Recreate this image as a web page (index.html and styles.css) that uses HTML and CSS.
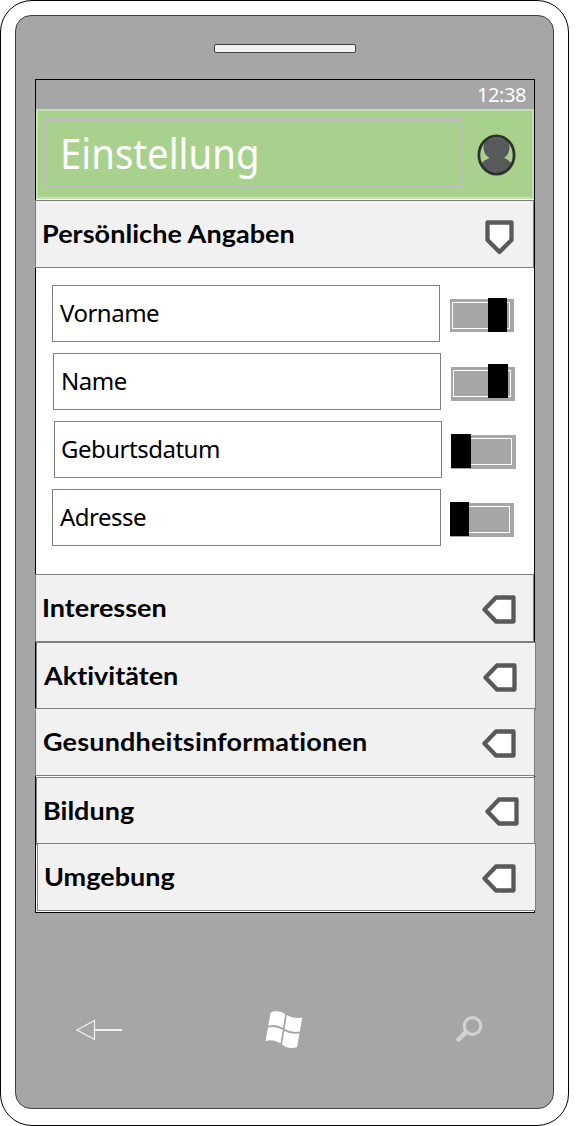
FILE: index.html
```html
<!DOCTYPE html>
<html lang="de">
<head>
<meta charset="utf-8">
<title>Einstellung</title>
<link rel="stylesheet" href="styles.css">
</head>
<body>
<svg class="defs" width="0" height="0">
  <symbol id="tag-left" viewBox="0 0 34 29">
    <path d="M2.500 14.500 L14 2.500 H31.500 V26.500 H14 Z" fill="#fff" stroke="#58595b" stroke-width="4.300" stroke-linejoin="round"/>
  </symbol>
</svg>
<div class="shell">
  <div class="body">
    <div class="speaker"></div>
    <main class="screen">
      <div class="status"><span class="time">12:38</span></div>
      <header class="header">
        <h1 class="title"><span>Einstellung</span></h1>
        <svg class="avatar" width="39" height="42" viewBox="0 0 39 42">
          <defs><clipPath id="face"><ellipse cx="19.500" cy="21" rx="18" ry="19.500"/></clipPath></defs>
          <g clip-path="url(#face)">
            <path d="M6.500 14 Q7 2 19.500 2 T32.500 14 Q32 21 27 24 Q38 28 38 42 H1 Q1 28 12.500 24 Q7 21 6.500 14Z" fill="#58595b"/>
            <path d="M5 10 Q10 2 20 2 T34 10 L30 7 Q20 2 9 7Z" fill="#6e6d75"/>
            <path d="M5 31 Q10 37 20 38 T34 31 L33 36 L20 41 L6 36Z" fill="#6a6770"/>
          </g>
          <ellipse cx="19.500" cy="21" rx="17.600" ry="19.100" fill="none" stroke="#2e332e" stroke-width="2.800"/>
        </svg>
      </header>
      <section class="row first"><h2 class="label">Persönliche Angaben</h2>
        <svg class="tag-down" width="29" height="35" viewBox="0 0 29 35"><path d="M2.500 2.500 H26.500 V20 L14.500 32 L2.500 20Z" fill="#fff" stroke="#58595b" stroke-width="4.300" stroke-linejoin="round"/></svg>
      </section>
      <div class="panel">
        <div class="entry e1"><div class="field">Vorname</div><div class="toggle"><i class="track"></i><b class="thumb"></b></div></div>
        <div class="entry e2"><div class="field">Name</div><div class="toggle"><i class="track"></i><b class="thumb"></b></div></div>
        <div class="entry e3"><div class="field">Geburtsdatum</div><div class="toggle"><i class="track"></i><b class="thumb"></b></div></div>
        <div class="entry e4"><div class="field">Adresse</div><div class="toggle"><i class="track"></i><b class="thumb"></b></div></div>
      </div>
      <section class="row r2"><h2 class="label">Interessen</h2><svg class="tag"><use href="#tag-left"/></svg></section>
      <section class="row r3"><h2 class="label">Aktivitäten</h2><svg class="tag"><use href="#tag-left"/></svg></section>
      <section class="row r4"><h2 class="label">Gesundheitsinformationen</h2><svg class="tag"><use href="#tag-left"/></svg></section>
      <section class="row r5"><h2 class="label">Bildung</h2><svg class="tag"><use href="#tag-left"/></svg></section>
      <section class="row r6"><h2 class="label">Umgebung</h2><svg class="tag"><use href="#tag-left"/></svg></section>
    </main>
    <nav class="keys">
      <svg width="48" height="40" viewBox="0 0 48 40"><path d="M2 20 L19.500 10.500 V29.500 Z" fill="none" stroke="#f2f2f2" stroke-width="1.200"/><path d="M19.500 20 H47" stroke="#f2f2f2" stroke-width="2"/></svg>
      <svg class="win" width="38" height="40" viewBox="0 0 38 40" fill="#fff">
        <path d="M5.500 3 Q7 1 11 1.200 Q17 1.200 20.200 4.200 L18 18 Q11 13.500 3.300 15.800Z"/>
        <path d="M21.800 5 Q29 9.500 37.200 7.500 L34.800 21.500 Q27 23 19.600 19Z"/>
        <path d="M3 17.500 Q10.500 15.500 17.700 20 L15.500 33.200 Q8 28.500 .4 31.300Z"/>
        <path d="M19.300 21 Q27 25 34.500 23.300 L32.200 37 Q24 40 17 34.500Z"/>
      </svg>
      <svg class="find" width="30" height="30" viewBox="0 0 30 30" fill="none" stroke="#d2d2d2"><circle cx="18.500" cy="11" r="8.300" stroke-width="3.200"/><path d="M12 17 L4.500 24.500" stroke-width="4.500" stroke-linecap="round"/></svg>
    </nav>
  </div>
</div>
</body>
</html>
```
FILE: styles.css
```css
* { box-sizing: border-box; }
body { margin: 0; background: #fff; font-family: "Noto Sans", "Open Sans", sans-serif; color: #000; }
.defs { position: absolute; }
.shell { width: 569px; height: 1126px; padding: 14px; border: 1px solid #000; border-radius: 32px; background: #fff; }
.body { width: 539px; height: 1094px; padding: 28px 0 0 19px; border: 1px solid #404040; border-radius: 16px; background: #a6a6a6; }
.speaker { width: 142px; height: 9px; margin-left: 179px; border: 1px solid #404040; border-radius: 2px; background: #f2f2f2; }
.screen { width: 500px; height: 834px; margin-top: 26px; border: 1px solid #000; background: #fff; }
.status { height: 29px; padding-right: 8px; background: #a6a6a6; color: #fff; font-size: 20px; line-height: 29px; text-align: right; }
.time { letter-spacing: -0.4px; }
.header { display: flex; height: 90px; padding: 7px 0 0 5px; border: 2px solid #c5e0b3; background: #a9d18e; }
.title { width: 419px; height: 70px; margin: 0; padding-left: 14px; border: 3px solid #bfbfbf; color: #fff; font-size: 41px; font-weight: 400; line-height: 65px; }
.title span { display: inline-block; transform: scaleX(0.935); transform-origin: left; }
.avatar { margin: 16px 0 0 15px; }
.row { display: flex; justify-content: space-between; width: 499px; height: 68px; margin-left: -1px; padding: 20px 17px 0 7px; border: 1px solid #7f7f7f; background: #f1f1f2; }
.row.first { margin-top: 1px; padding: 19px 19px 0 6px; }
.label { height: 28px; margin: -1px 0 0; font: 700 27px/28px Lato, sans-serif; font-variant-ligatures: none; white-space: nowrap; transform: scaleY(0.94); }
.first .label { margin-top: 0; letter-spacing: 0.05px; }
.tag { width: 34px; height: 29px; }
.r2 { padding-left: 6px; }
.panel { display: flex; flex-direction: column; gap: 11px; height: 306px; padding: 17px 0 0 16px; }
.entry { display: flex; height: 57px; }
.e2 { margin-left: 1px; }
.e3 { margin-left: 2px; }
.field { width: 388px; height: 57px; padding-left: 7px; border: 1px solid #7f7f7f; background: #fff; font-size: 24px; letter-spacing: -0.5px; line-height: 53px; }
.e3 .field { padding-left: 6px; }
.toggle { display: grid; width: 64px; height: 33px; margin: 14px 0 0 10px; background: #a6a6a6; }
.track { grid-area: 1 / 1; width: 58px; height: 27px; margin: 3px 0 0 2px; border: 1px solid #fff; }
.thumb { grid-area: 1 / 1; width: 19px; height: 34px; margin: -1px 0 0 38px; background: #000; }
.e2 .toggle, .e4 .toggle, .e3 .toggle { height: 34px; }
.e2 .thumb { width: 20px; margin: -3px 0 0 37px; }
.e3 .toggle { width: 65px; margin-left: 9px; }
.e3 .track { width: 59px; }
.e3 .thumb { width: 20px; margin-left: 0; }
.e4 .field { width: 389px; }
.e4 .toggle { margin-left: 9px; }
.e4 .thumb { margin-left: 0; }
.r3 { width: 500px; margin-left: 0; padding-right: 18px; }
.r4 { width: 500px; margin-top: -2px; padding-right: 18px; padding-left: 7px; }
.r4 .label { letter-spacing: 0.18px; }
.r5 { margin: 1px 0 0; padding: 19px 15px 0 6px; }
.r5 .label { margin-top: 0; }
.r6 { margin: -2px 0 0 1px; padding-right: 19px; padding-left: 6px; }
.keys { display: flex; width: 500px; height: 40px; margin-top: 97px; padding-left: 40px; }
.win { margin-left: 142px; }
.find { margin: 5px 0 0 151px; }
```
